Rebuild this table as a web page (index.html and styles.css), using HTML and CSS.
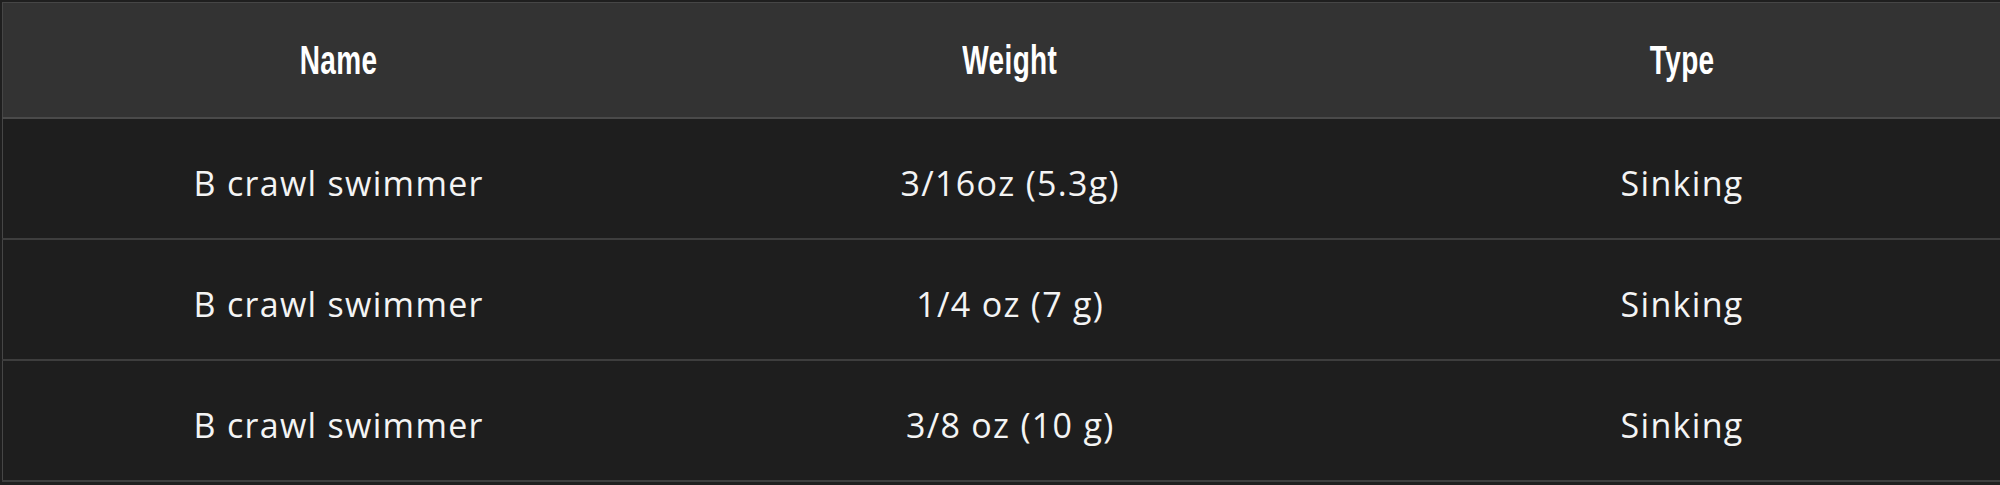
FILE: index.html
```html
<!DOCTYPE html>
<html>
<head>
<meta charset="utf-8">
<link rel="stylesheet" href="styles.css">
</head>
<body>
<div class="wrap">
<table class="spec">
<thead>
<tr><th><span class="hd">Name</span></th><th><span class="hd">Weight</span></th><th><span class="hd">Type</span></th></tr>
</thead>
<tbody>
<tr><td>B crawl swimmer</td><td>3/16oz (5.3g)</td><td>Sinking</td></tr>
<tr><td>B crawl swimmer</td><td>1/4 oz (7 g)</td><td>Sinking</td></tr>
<tr><td>B crawl swimmer</td><td>3/8 oz (10 g)</td><td>Sinking</td></tr>
</tbody>
</table>
</div>
</body>
</html>
```
FILE: styles.css
```css
html, body {
  margin: 0;
  padding: 0;
  background: #1f1f1f;
  overflow: hidden;
}
.wrap {
  padding: 2px 0 0 2px;
  width: 2020px;
}
.spec {
  width: 2016px;
  border-collapse: collapse;
  table-layout: fixed;
  border-top: 1px solid #464646;
  border-left: 1px solid #464646;
}
.spec th {
  background: #333333;
  color: #ffffff;
  font-family: "Liberation Sans", Arial, sans-serif;
  font-weight: 700;
  font-size: 40px;
  height: 114px;
  padding: 0;
  text-align: center;
  vertical-align: middle;
  border-bottom: 2px solid #4a4a4a;
}
.hd {
  display: inline-block;
  transform: scaleX(0.7);
  letter-spacing: 0.5px;
}
.spec td {
  background: #1e1e1e;
  color: #f4f4f4;
  font-family: "Open Sans", "Noto Sans", sans-serif;
  font-size: 34px;
  letter-spacing: 1.3px;
  height: 121px;
  padding: 8px 0 0 0;
  box-sizing: border-box;
  text-align: center;
  vertical-align: middle;
  border-bottom: 2px solid #3e3e3e;
}
```
